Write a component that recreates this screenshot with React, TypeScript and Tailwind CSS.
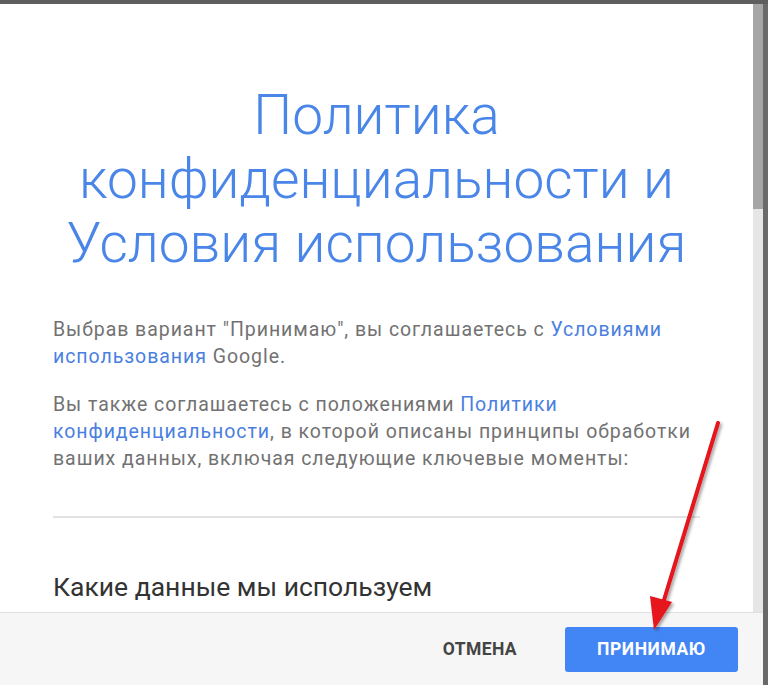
import React from "react";

export default function App() {
  return (
    <div className="w-[768px] h-[685px] overflow-hidden bg-[#5c5c5c] flex flex-col relative" style={{ fontFamily: "Roboto, 'Noto Sans', sans-serif" }}>
      <div className="h-[4px] bg-[#5e5e5e] shrink-0" />
      <div className="flex flex-1 min-h-0">
        <div className="w-[763px] flex flex-col bg-white">
          <div className="flex h-[608px] shrink-0">
            <div className="flex-1 overflow-hidden px-[53px] pt-[79px]">
              <h1 className="text-center text-[55px] leading-[64px] font-light text-[#4a86e8] -mx-[10px]">
                Политика
                <br />
                конфиденциальности и
                <br />
                Условия использования
              </h1>
              <p className="mt-[41px] text-[19.5px] leading-[27px] tracking-[0.95px] text-[#727272]">
                Выбрав вариант "Принимаю", вы соглашаетесь с <span className="text-[#4a7fe0]">Условиями использования</span> Google.
              </p>
              <p className="mt-[21px] text-[19.5px] leading-[27px] tracking-[0.95px] text-[#727272]">
                Вы также соглашаетесь с положениями <span className="text-[#4a7fe0]">Политики конфиденциальности</span>, в которой описаны принципы обработки ваших данных, включая следующие ключевые моменты:
              </p>
              <div className="mt-[44px] h-[2px] bg-[#e2e2e2]" />
              <h2 className="mt-[52px] text-[26.5px] leading-[34px] text-[#333333]">Какие данные мы используем</h2>
            </div>
            <div className="w-[10px] bg-[#e6e6e6] flex flex-col">
              <div className="h-[205px] bg-[#a6a6a6]" />
            </div>
          </div>
          <div className="flex-1 bg-[#f6f6f6] border-t border-[#e0e0e0] flex items-center justify-end gap-[48px] pr-[25px]">
            <button className="text-[17.5px] font-bold text-[#444444] tracking-[0.4px]">ОТМЕНА</button>
            <button className="w-[173px] h-[45px] rounded-[3px] bg-[#4285f4] text-white text-[17.5px] font-bold tracking-[0.6px]">ПРИНИМАЮ</button>
          </div>
        </div>
        <div className="flex-1 bg-[#6a6a6a]" />
      </div>
      <svg className="absolute left-0 top-0 pointer-events-none" width="768" height="685">
        <defs>
          <filter id="sh" x="-20%" y="-20%" width="140%" height="140%">
            <feDropShadow dx="2" dy="2" stdDeviation="1.5" floodColor="#000" floodOpacity="0.35" />
          </filter>
        </defs>
        <g filter="url(#sh)">
          <line x1="718" y1="423" x2="664" y2="600" stroke="#e5121b" strokeWidth="4" strokeLinecap="round" />
          <polygon points="654,630 650,596 672,602" fill="#e5121b" />
        </g>
      </svg>
    </div>
  );
}
